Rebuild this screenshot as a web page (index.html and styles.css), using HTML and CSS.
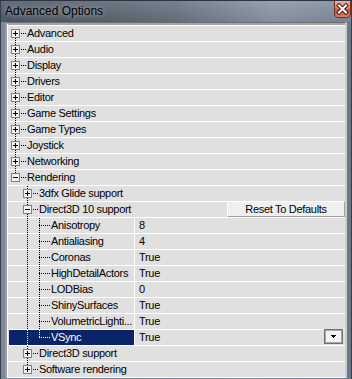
FILE: index.html
```html
<!DOCTYPE html>
<html lang="en">
<head>
  <meta charset="UTF-8" />
  <title>Advanced Options</title>
  <link rel="stylesheet" href="styles.css">
</head>
<body>
  <div class="window">
    <div class="titlebar">
      <span class="title">Advanced Options</span>
      <div class="close">
        <svg width="15" height="14" viewBox="0 0 15 14">
          <path d="M4 3.5 L11 10.5 M11 3.5 L4 10.5" stroke="#3a1a14" stroke-width="4" stroke-linecap="square"/>
          <path d="M4 3.5 L11 10.5 M11 3.5 L4 10.5" stroke="#fff" stroke-width="2" stroke-linecap="square"/>
        </svg>
      </div>
    </div>

    <div class="body">
      <div class="panel">
        <div class="list">
          <div class="row"><div class="name"><span class="n start"><i class="box plus"></i></span><span class="t">Advanced</span></div></div>
          <div class="row"><div class="name"><span class="n tee"><i class="box plus"></i></span><span class="t">Audio</span></div></div>
          <div class="row"><div class="name"><span class="n tee"><i class="box plus"></i></span><span class="t">Display</span></div></div>
          <div class="row"><div class="name"><span class="n tee"><i class="box plus"></i></span><span class="t">Drivers</span></div></div>
          <div class="row"><div class="name"><span class="n tee"><i class="box plus"></i></span><span class="t">Editor</span></div></div>
          <div class="row"><div class="name"><span class="n tee"><i class="box plus"></i></span><span class="t">Game Settings</span></div></div>
          <div class="row"><div class="name"><span class="n tee"><i class="box plus"></i></span><span class="t">Game Types</span></div></div>
          <div class="row"><div class="name"><span class="n tee"><i class="box plus"></i></span><span class="t">Joystick</span></div></div>
          <div class="row"><div class="name"><span class="n tee"><i class="box plus"></i></span><span class="t">Networking</span></div></div>
          <div class="row"><div class="name"><span class="n end"><i class="box"></i></span><span class="t">Rendering</span></div></div>

          <div class="row"><div class="name"><span class="c"></span><span class="n tee"><i class="box plus"></i></span><span class="t">3dfx Glide support</span></div></div>
          <div class="row">
            <div class="name"><span class="c"></span><span class="n tee"><i class="box"></i></span><span class="t">Direct3D 10 support</span></div>
            <button class="reset">Reset To Defaults</button>
          </div>

          <div class="row"><div class="name prop"><span class="c"></span><span class="c v"></span><span class="n tee"></span><span class="t">Anisotropy</span></div><div class="val">8</div></div>
          <div class="row"><div class="name prop"><span class="c"></span><span class="c v"></span><span class="n tee"></span><span class="t">Antialiasing</span></div><div class="val">4</div></div>
          <div class="row"><div class="name prop"><span class="c"></span><span class="c v"></span><span class="n tee"></span><span class="t">Coronas</span></div><div class="val">True</div></div>
          <div class="row"><div class="name prop"><span class="c"></span><span class="c v"></span><span class="n tee"></span><span class="t">HighDetailActors</span></div><div class="val">True</div></div>
          <div class="row"><div class="name prop"><span class="c"></span><span class="c v"></span><span class="n tee"></span><span class="t">LODBias</span></div><div class="val">0</div></div>
          <div class="row"><div class="name prop"><span class="c"></span><span class="c v"></span><span class="n tee"></span><span class="t">ShinySurfaces</span></div><div class="val">True</div></div>
          <div class="row"><div class="name prop"><span class="c"></span><span class="c v"></span><span class="n tee"></span><span class="t">VolumetricLighti...</span></div><div class="val">True</div></div>
          <div class="row">
            <div class="name prop sel"><span class="c"></span><span class="c v"></span><span class="n end"></span><span class="t">VSync</span></div>
            <div class="val">True
              <span class="drop">
                <svg width="5" height="3" viewBox="0 0 5 3" shape-rendering="crispEdges">
                  <rect x="0" y="0" width="5" height="1" fill="#000"/>
                  <rect x="1" y="1" width="3" height="1" fill="#000"/>
                  <rect x="2" y="2" width="1" height="1" fill="#000"/>
                </svg>
              </span>
            </div>
          </div>

          <div class="row"><div class="name"><span class="c"></span><span class="n tee"><i class="box plus"></i></span><span class="t">Direct3D support</span></div></div>
          <div class="row"><div class="name"><span class="c"></span><span class="n end"><i class="box plus"></i></span><span class="t">Software rendering</span></div></div>
        </div>
      </div>
    </div>
  </div>
</body>
</html>
```

FILE: styles.css
```css
body {
  margin: 0;
  font-family: "Liberation Sans", Arial, sans-serif;
  font-size: 11px;
  color: #000;
}

.window {
  width: 352px;
  height: 379px;
  box-sizing: border-box;
  overflow: hidden;
  border-top: 1px solid #2c3440;
  border-left: 1px solid #363e4a;
  border-right: 1px solid #363e4a;
  background: linear-gradient(to right, #7d8797, #6f7a8b 40%, #7a8494 70%, #6c7686);
}

.titlebar {
  height: 21px;
  display: flex;
  align-items: flex-start;
  background:
    linear-gradient(to bottom, rgba(255, 255, 255, 0.12), rgba(0, 0, 0, 0.04)),
    linear-gradient(to right, #4d5868, #58636f 30%, #66717f 50%, #8a94a4 78%, #7c8798);
}

.title {
  margin: 3px 0 0 4px;
  font-size: 12px;
  line-height: 15px;
  color: #000;
  text-shadow: 0 0 5px rgba(255, 255, 255, 0.6);
}

.close {
  margin: -1px 0 0 auto;
  width: 17px;
  height: 18px;
  box-sizing: border-box;
  border: 1px solid #6e3024;
  border-radius: 0 0 4px 4px;
  background: linear-gradient(to bottom, #eeae9c, #de8068 45%, #cc5436 55%, #de7d62);
  display: flex;
  align-items: center;
  justify-content: center;
}

.body {
  display: flex;
  padding: 0 4px;
}

.panel {
  flex: 1;
  border-top: 1px solid #6e6e6e;
  border-left: 2px solid #9c9c9c;
  border-right: 2px solid #cdcdcd;
  background: #e0e0e0;
}

.list {
  border-top: 2px solid #a4a4a4;
  border-left: 1px solid #fff;
}

.list::before {
  content: "";
  display: block;
  height: 1px;
  background: #fff;
}

.row {
  --dot: #000;
  display: flex;
  height: 16px;
  padding-left: 1px;
  letter-spacing: -0.3px;
  background: linear-gradient(#fff, #fff) 0 100% / 100% 1px no-repeat, #e0e0e0;
}

.name {
  display: flex;
  flex: 1;
  min-width: 0;
}

.name.prop {
  flex: none;
  width: 125px;
}

.name.sel {
  --dot: #fff;
  color: #fff;
  background: linear-gradient(#0a246a, #0a246a) 0 0 / 100% 15px no-repeat;
}

.t {
  line-height: 15px;
  white-space: nowrap;
}

.val {
  flex: 1;
  display: flex;
  border-left: 1px solid #fff;
  padding-left: 4px;
  line-height: 15px;
}

/* tree connectors */
.c {
  flex: none;
  width: 12px;
  height: 16px;
}

.n {
  flex: none;
  width: 18px;
  height: 16px;
  box-sizing: border-box;
  padding: 3px 0 0 2px;
}

.c.v {
  background: repeating-linear-gradient(to bottom, var(--dot) 0 1px, transparent 1px 2px) 6px 0 / 1px 16px no-repeat;
}

.n.tee {
  background:
    repeating-linear-gradient(to right, var(--dot) 0 1px, transparent 1px 2px) 6px 7px / 12px 1px no-repeat,
    repeating-linear-gradient(to bottom, var(--dot) 0 1px, transparent 1px 2px) 6px 0 / 1px 16px no-repeat;
}

.n.end {
  background:
    repeating-linear-gradient(to right, var(--dot) 0 1px, transparent 1px 2px) 6px 7px / 12px 1px no-repeat,
    repeating-linear-gradient(to bottom, var(--dot) 0 1px, transparent 1px 2px) 6px 0 / 1px 8px no-repeat;
}

.n.start {
  background:
    repeating-linear-gradient(to right, var(--dot) 0 1px, transparent 1px 2px) 6px 7px / 12px 1px no-repeat,
    repeating-linear-gradient(to bottom, var(--dot) 0 1px, transparent 1px 2px) 6px 8px / 1px 8px no-repeat;
}

.box {
  display: block;
  width: 9px;
  height: 9px;
  box-sizing: border-box;
  border: 1px solid #808080;
  background: linear-gradient(#000, #000) 1px 3px / 5px 1px no-repeat, #f4f4f4;
}

.box.plus {
  background:
    linear-gradient(#000, #000) 1px 3px / 5px 1px no-repeat,
    linear-gradient(#000, #000) 3px 1px / 1px 5px no-repeat,
    #f4f4f4;
}

.reset {
  margin: -1px 0 0 auto;
  width: 118px;
  height: 16px;
  padding: 0;
  box-sizing: border-box;
  border: 1px solid;
  border-color: #fff #a0a0a0 #a0a0a0 #fff;
  background: #efefef;
  font: inherit;
  letter-spacing: inherit;
  line-height: 14px;
  color: #000;
  text-align: center;
}

.drop {
  margin: -1px 2px 0 auto;
  width: 19px;
  height: 15px;
  box-sizing: border-box;
  border: 1px solid #707070;
  box-shadow: inset 0 0 0 1px #a8a8a8;
  background: #f2f2f2;
  display: flex;
  align-items: center;
  justify-content: center;
}

.drop svg {
  display: block;
}
```
